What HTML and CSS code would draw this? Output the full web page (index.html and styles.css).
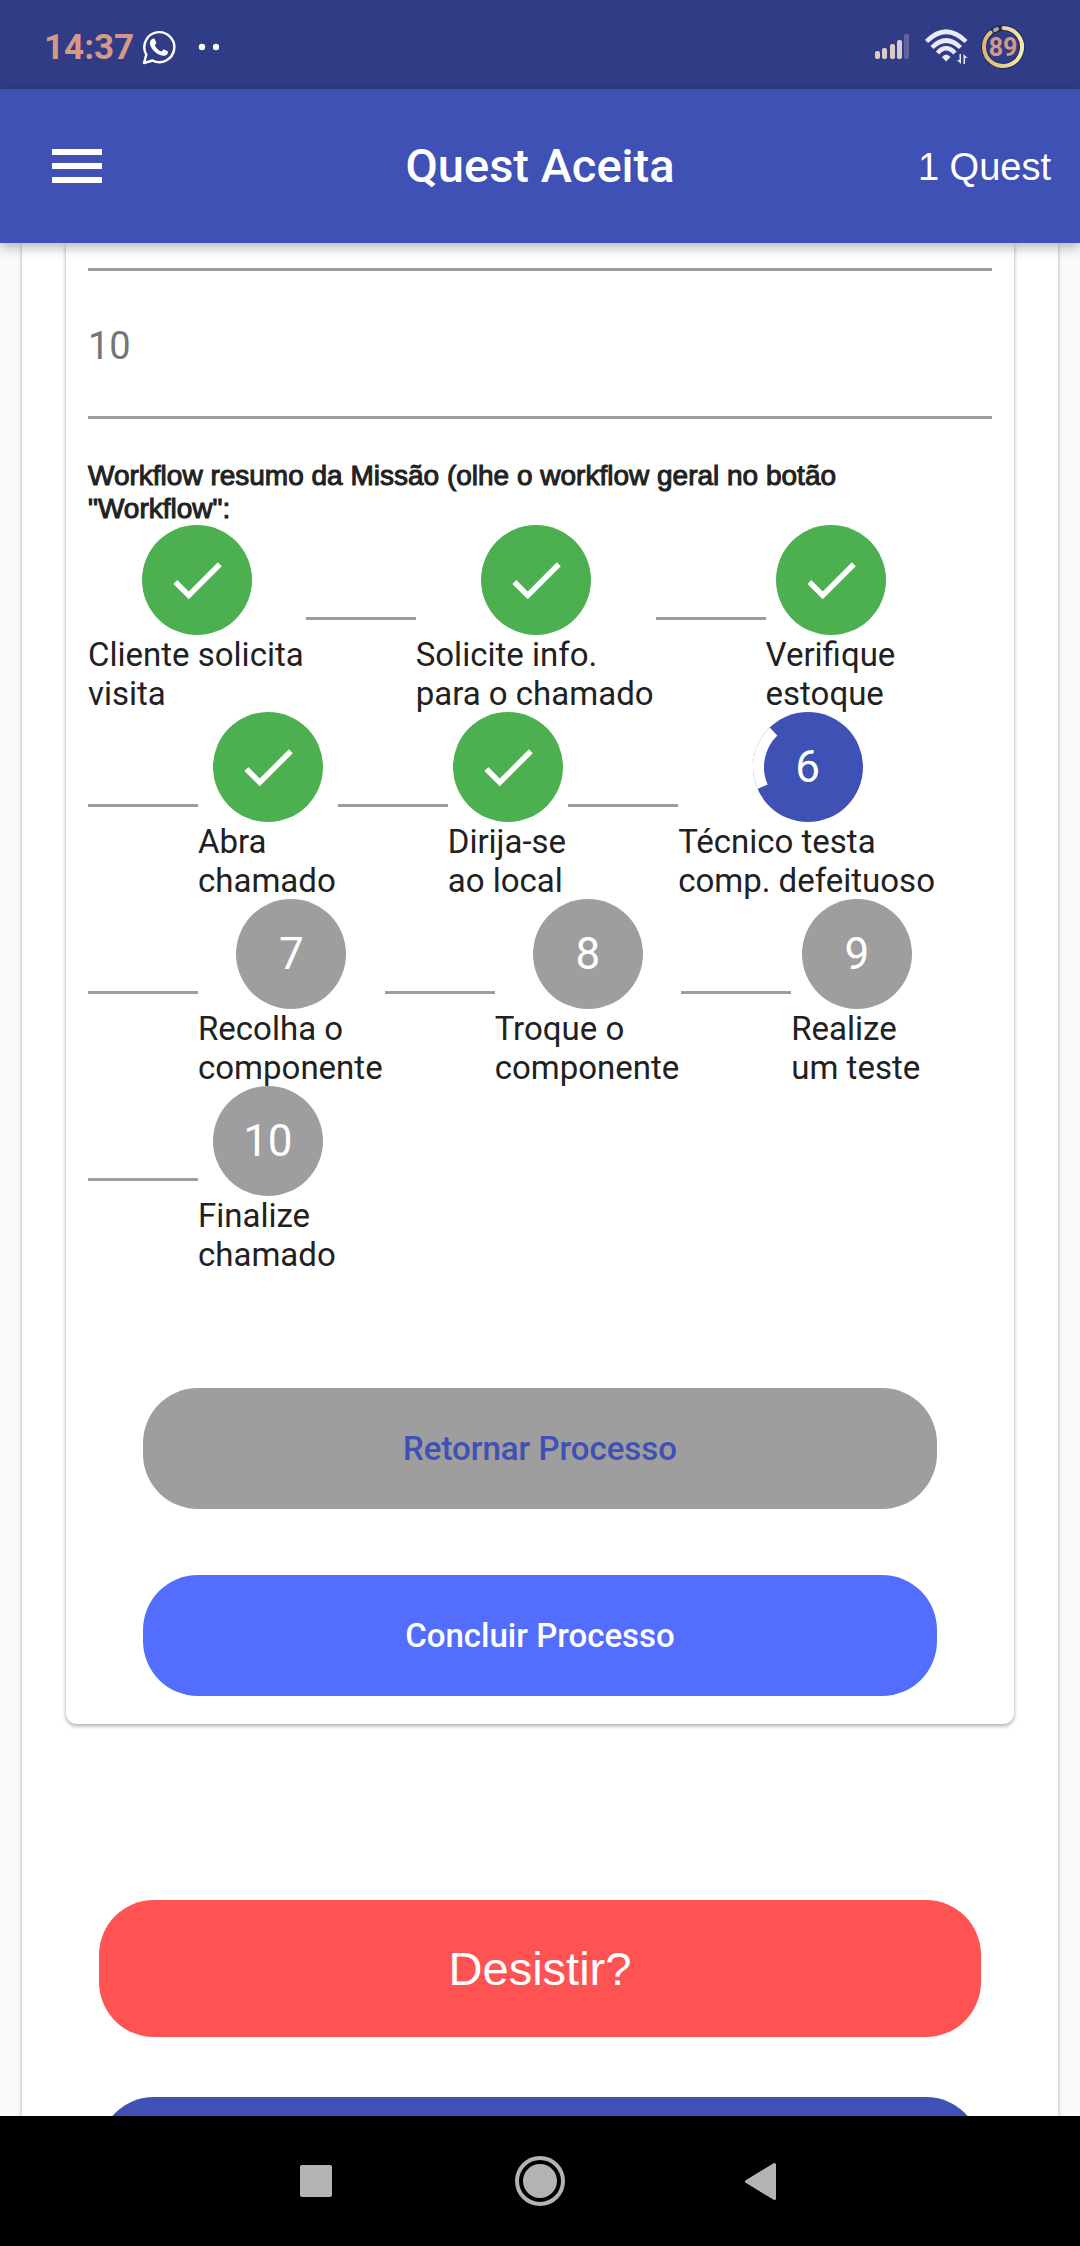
FILE: index.html
```html
<!DOCTYPE html>
<html lang="pt-BR">
<head>
<meta charset="utf-8">
<meta name="viewport" content="width=device-width, initial-scale=1">
<title>Quest Aceita</title>
<link rel="stylesheet" href="styles.css">
</head>
<body>
<svg class="defs" aria-hidden="true">
  <symbol id="check" viewBox="0 0 24 24"><path fill="currentColor" d="M9 16.17L4.83 12l-1.42 1.41L9 19 21 7l-1.41-1.41z"/></symbol>
</svg>
<div class="app">
  <div class="status">
    <span class="clock">14:37</span>
    <svg class="whatsapp" viewBox="0 0 34 36" aria-hidden="true">
      <path d="M2 34l2.300-8.400A15 15 0 1 1 10.500 31.500z" fill="none" stroke="#fff" stroke-width="2.400" stroke-linejoin="round"/>
      <path d="M9.500 10.500c1.500-1.300 2.800-1.200 3.300-.2l1.400 3.300c.2.600 0 1.100-1.400 2.800 1.500 3 4 5 6.700 6.200 1.500-1.900 2-2.400 2.700-2.100l3.200 1.500c1 .6.500 2.500-.3 3.400-1.500 1.500-4 1.900-7 .7-4.500-1.800-7.800-5.200-9.500-8.800-1.200-2.700-.9-5.200.9-6.800z" fill="#fff"/>
    </svg>
    <svg class="dots" viewBox="0 0 22 8" aria-hidden="true"><circle cx="4" cy="4" r="3.200" fill="#fff"/><circle cx="18" cy="4" r="3.200" fill="#fff"/></svg>
    <svg class="signal" viewBox="0 0 34 26" aria-hidden="true">
      <g fill="#d9ccc4"><rect x="0" y="17" width="5" height="8" rx="2"/><rect x="7" y="14" width="5" height="11" rx="2"/><rect x="15" y="10" width="5" height="15" rx="2"/><rect x="22" y="6" width="5" height="19" rx="2"/></g>
      <rect x="29" y="0" width="5" height="25" rx="2" fill="#62659b"/>
    </svg>
    <svg class="wifi" viewBox="0 0 44 36" aria-hidden="true">
      <g fill="none" stroke="#e9e9fa" stroke-width="4.500">
        <path d="M1.500 12.500Q21 -7 41 12.500"/><path d="M7 18.500Q21 4.500 35.500 18.500"/><path d="M12.500 24Q21 14.500 30 24"/>
      </g>
      <path d="M21 32.500l-4-4.500q4-5 8.500 0z" fill="#e9e9fa"/>
      <path d="M36 25v10l-4-4h2.500v-6zM38.500 35V25l4 4H40v6z" fill="#e9e9fa"/>
    </svg>
    <svg class="battery" viewBox="0 0 44 46" aria-hidden="true">
      <defs><linearGradient id="gold"><stop offset="0" stop-color="#dcb67c"/><stop offset="1" stop-color="#f1ebb0"/></linearGradient></defs>
      <circle cx="22" cy="23" r="19" fill="none" stroke="#26294d" stroke-width="6"/>
      <path d="M22.500 4A19 19 0 1 1 9.600 8.600" fill="none" stroke="url(#gold)" stroke-width="4" stroke-linecap="round"/>
      <path d="M14 6l2-1" stroke="#aaa2a0" stroke-width="4" stroke-linecap="round"/>
      <text x="22" y="32" text-anchor="middle" class="level">89</text>
    </svg>
  </div>
  <header class="appbar">
    <button class="menu" aria-label="Menu"><span></span><span></span><span></span></button>
    <h1 class="title">Quest Aceita</h1>
    <span class="count">1 Quest</span>
  </header>
  <main class="scroll">
    <div class="panel">
      <section class="card">
        <div class="previous"></div>
        <input class="field" type="text" value="10" aria-label="Quantidade" readonly>
        <h2 class="heading">Workflow resumo da Missão (olhe o workflow geral no botão "Workflow":</h2>
        <div class="flow">
          <div class="step"><span class="mark done"><svg><use href="#check"/></svg></span><span class="label">Cliente solicita<br>visita</span></div>
          <span class="link"></span>
          <div class="step"><span class="mark done"><svg><use href="#check"/></svg></span><span class="label">Solicite info.<br>para o chamado</span></div>
          <span class="link"></span>
          <div class="step"><span class="mark done"><svg><use href="#check"/></svg></span><span class="label">Verifique<br>estoque</span></div>
          <span class="link"></span>
          <div class="step"><span class="mark done"><svg><use href="#check"/></svg></span><span class="label">Abra<br>chamado</span></div>
          <span class="link"></span>
          <div class="step"><span class="mark done"><svg><use href="#check"/></svg></span><span class="label">Dirija-se<br>ao local</span></div>
          <span class="link"></span>
          <div class="step"><span class="mark current">6<svg class="spinner" viewBox="0 0 110 110"><path d="M9.600 74.700A49.500 49.500 0 0 1 20.500 19.500" fill="none" stroke="#fff" stroke-width="11"/></svg></span><span class="label">Técnico testa<br>comp. defeituoso</span></div>
          <span class="link"></span>
          <div class="step"><span class="mark">7</span><span class="label">Recolha o<br>componente</span></div>
          <span class="link"></span>
          <div class="step"><span class="mark">8</span><span class="label">Troque o<br>componente</span></div>
          <span class="link"></span>
          <div class="step"><span class="mark">9</span><span class="label">Realize<br>um teste</span></div>
          <span class="link"></span>
          <div class="step"><span class="mark">10</span><span class="label">Finalize<br>chamado</span></div>
        </div>
        <div class="actions">
          <button class="btn back">Retornar Processo</button>
          <button class="btn finish">Concluir Processo</button>
        </div>
      </section>
      <div class="options">
        <button class="big quit">Desistir?</button>
        <button class="big more" aria-label="Workflow"></button>
      </div>
    </div>
  </main>
  <nav class="navbar">
    <button aria-label="Recentes"><svg viewBox="0 0 52 52"><rect x="10" y="10" width="32" height="32" rx="2" fill="#b3b3b3"/></svg></button>
    <button aria-label="Início"><svg viewBox="0 0 52 52"><circle cx="26" cy="26" r="23" fill="none" stroke="#b3b3b3" stroke-width="4"/><circle cx="26" cy="26" r="17" fill="#b3b3b3"/></svg></button>
    <button aria-label="Voltar"><svg viewBox="0 0 52 52"><path d="M8.500 26.500L36.500 9.500V43.500z" fill="#b3b3b3" stroke="#b3b3b3" stroke-width="3" stroke-linejoin="round"/></svg></button>
  </nav>
</div>
</body>
</html>
```

FILE: styles.css
```css
* { box-sizing: border-box; }
body { margin: 0; font-family: Roboto, sans-serif; color: #212121; }
button { border: 0; padding: 0; background: none; font: inherit; color: inherit; }
.defs { display: none; }
.app { display: flex; flex-direction: column; height: 100vh; background: #fafafa; }

.status { flex: none; display: flex; align-items: center; height: 89px; padding: 5px 55px 0 44px; background: #303c86; }
.clock { font-size: 35px; font-weight: 700; color: #d49a86; }
.whatsapp { width: 34px; height: 36px; margin-left: 8px; }
.dots { width: 22px; height: 8px; margin-left: 22px; }
.signal { width: 34px; height: 26px; margin-left: auto; }
.wifi { width: 44px; height: 36px; margin-left: 16px; }
.battery { width: 44px; height: 46px; margin-left: 12px; }
.level { font: 700 25px Roboto, sans-serif; fill: #d49a86; }

.appbar { flex: none; position: relative; z-index: 1; display: grid; grid-template-columns: 1fr auto 1fr; align-items: center; height: 154px; padding: 0 29px; background: #3f51b5; color: #fff; box-shadow: 0 4px 12px rgba(0, 0, 0, .3); }
.menu { display: flex; flex-direction: column; gap: 8px; width: 50px; margin-left: 23px; }
.menu span { height: 6px; background: #fff; }
.title { margin: 0; font-size: 47px; font-weight: 500; line-height: 56px; }
.count { justify-self: end; padding-top: 2px; font: 38px/44px "Liberation Sans", sans-serif; }

.scroll { flex: 1; min-height: 0; overflow-y: auto; scrollbar-width: none; padding: 0 22px; }
.panel { padding: 0 44px 44px; background: #fff; box-shadow: 0 2px 4px rgba(0, 0, 0, .3); }
.card { padding: 0 22px 28px; border-radius: 0 0 11px 11px; background: #fff; box-shadow: 0 2px 4px rgba(0, 0, 0, .35); }
.previous { height: 28px; border-bottom: 3px solid #9e9e9e; }
.field { display: block; width: 100%; height: 148px; padding: 4px 0 0; border: 0; border-bottom: 3px solid #9e9e9e; border-radius: 0; outline: 0; background: none; font: 38px Roboto, sans-serif; color: #757575; }
.heading { margin: 40px 0 0; padding-right: 44px; font: 400 28px/33px "Liberation Sans", sans-serif; -webkit-text-stroke: 1px #212121; }

.flow { display: flex; flex-wrap: wrap; align-items: center; }
.link { width: 110px; height: 3px; background: #9e9e9e; }
.step { display: flex; flex-direction: column; align-items: center; height: 187px; }
.mark { flex: none; position: relative; display: flex; align-items: center; justify-content: center; width: 110px; height: 110px; border-radius: 50%; background: #9e9e9e; color: #fff; font-size: 44px; }
.mark svg { width: 66px; height: 66px; }
.mark .spinner { position: absolute; inset: 0; width: 110px; height: 110px; }
.done { background: #4caf50; }
.current { background: #3f51b5; }
.label { padding-right: 2px; font-size: 33px; line-height: 39px; white-space: nowrap; }

.actions { display: flex; flex-direction: column; gap: 66px; padding: 115px 55px 0; }
.btn { height: 121px; border-radius: 55px; font-size: 33px; font-weight: 500; }
.back { background: #9e9e9e; color: #3f51b5; }
.finish { background: #536dfe; color: #fff; }
.options { display: flex; flex-direction: column; gap: 60px; padding: 176px 33px 0; }
.big { height: 137px; border-radius: 55px; color: #fff; font: 47px "Liberation Sans", sans-serif; }
.quit { background: #ff5252; }
.more { background: #3f51b5; }

.navbar { flex: none; position: relative; z-index: 1; display: flex; align-items: center; justify-content: center; gap: 172px; height: 130px; background: #000; }
.navbar button { width: 52px; }
.navbar svg { display: block; width: 52px; height: 52px; }
```
